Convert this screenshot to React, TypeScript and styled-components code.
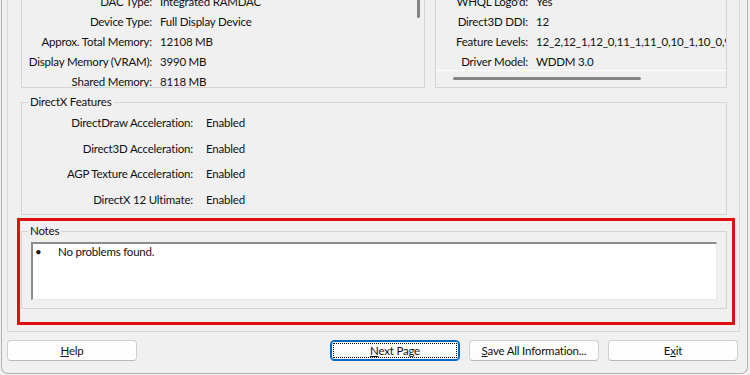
import React from 'react';
import styled, { createGlobalStyle } from 'styled-components';

const GlobalStyle = createGlobalStyle`
  html, body {
    margin: 0;
    padding: 0;
    background: #f0f0f0;
  }
  body {
    font-family: Lato, 'Noto Sans', 'Liberation Sans', sans-serif;
    font-size: 11.5px;
    letter-spacing: -0.2px;
    color: #111;
  }
`;

const Screen = styled.div`
  width: 750px;
  height: 375px;
  overflow: hidden;
  background: #f0f0f0;
`;

const Frame = styled.div`
  box-sizing: border-box;
  margin-left: 1px;
  width: 747px;
  height: 374px;
  border: 1px solid #b4b4b4;
  border-top: none;
  border-radius: 0 0 7px 7px;
  padding: 0 7px 0 5px;
  display: flex;
  flex-direction: column;
`;

const TabPanel = styled.div`
  box-sizing: border-box;
  height: 332px;
  border: 1px solid #d9d9d9;
  border-top: none;
  padding: 0 12px 0 13px;
  display: flex;
  flex-direction: column;
`;

const TopRow = styled.div`
  margin-top: -40px;
  height: 128px;
  display: grid;
  grid-template-columns: 404px 1fr;
  column-gap: 10px;
`;

const Box = styled.div`
  box-sizing: border-box;
  border: 1px solid #d5d5d5;
  display: flex;
  overflow: hidden;
`;

const ColumnBox = styled(Box)`
  flex-direction: column;
`;

const List = styled.div`
  flex: 1;
  padding-top: 10px;
  overflow: hidden;
`;

const Row = styled.div<{ $label: number; $gap: number; $h: number }>`
  display: flex;
  height: ${({ $h }) => $h}px;
  align-items: center;
  white-space: nowrap;

  & > span:first-child {
    flex: 0 0 ${({ $label }) => $label}px;
    text-align: right;
  }
  & > span:last-child {
    margin-left: ${({ $gap }) => $gap}px;
  }
`;

const VTrack = styled.div`
  flex: 0 0 12px;
  display: flex;
  justify-content: center;
`;

const VThumb = styled.div`
  margin-left: 1px;
  width: 3px;
  height: 57px;
  border-radius: 2px;
  background: #858585;
`;

const HTrack = styled.div`
  box-sizing: border-box;
  flex: 0 0 17px;
  border-top: 1px solid #ffffff;
  padding: 6px 0 0 17px;
`;

const HThumb = styled.div`
  width: 188px;
  height: 3px;
  border-radius: 2px;
  background: #858585;
`;

const Group = styled.fieldset`
  margin: 0;
  padding: 0;
  min-width: 0;
  border: 1px solid #d5d5d5;

  & > legend {
    margin-left: 6px;
    padding: 0 2px;
    line-height: 16px;
  }
`;

const FeatureGroup = styled(Group)`
  margin-top: 6px;
  padding-bottom: 2px;
`;

const Highlight = styled.div`
  box-sizing: border-box;
  margin: 3px -8px 0 -4px;
  border: 3px solid #e0100f;
  padding: 2px 5px 13px 1px;
`;

const NoteBox = styled.div`
  box-sizing: border-box;
  height: 58px;
  margin: 3px 9px 8px;
  background: #ffffff;
  border-style: solid;
  border-width: 2px 1px 1px 2px;
  border-color: #8c8c8c #e6e6e6 #e6e6e6 #8c8c8c;
  padding-left: 2px;
  display: flex;
  line-height: 16px;
`;

const Bullet = styled.span`
  flex: 0 0 23px;
`;

const ButtonBar = styled.div`
  margin-top: 8px;
  padding-right: 2px;
  display: flex;
  gap: 9px;
`;

const Spacer = styled.div`
  flex: 1;
`;

const Button = styled.div<{ $default?: boolean }>`
  box-sizing: border-box;
  width: 130px;
  height: 21px;
  border: 1px solid ${({ $default }) => ($default ? '#0067c0' : '#d0d0d0')};
  border-bottom-color: ${({ $default }) => ($default ? '#0067c0' : '#b8b8b8')};
  border-radius: 4px;
  background: #fdfdfd;
  display: flex;
  align-items: center;
  justify-content: center;
  outline: ${({ $default }) => ($default ? '1px dotted #000' : 'none')};
  outline-offset: -4px;
  box-shadow: ${({ $default }) => ($default ? 'inset 0 0 0 1px #0067c0' : 'none')};
`;

const Key = styled.span`
  text-decoration: underline;
`;

const displayRows = [
  ['Chip Type:', 'Intel(R) Iris(R) Xe Graphics Family'],
  ['DAC Type:', 'Integrated RAMDAC'],
  ['Device Type:', 'Full Display Device'],
  ['Approx. Total Memory:', '12108 MB'],
  ['Display Memory (VRAM):', '3990 MB'],
  ['Shared Memory:', '8118 MB'],
];

const driverRows = [
  ['Date:', '3/9/2023 5:30:00 PM'],
  ["WHQL Logo'd:", 'Yes'],
  ['Direct3D DDI:', '12'],
  ['Feature Levels:', '12_2,12_1,12_0,11_1,11_0,10_1,10_0,9_3,9_2,9_1'],
  ['Driver Model:', 'WDDM 3.0'],
];

const featureRows = [
  ['DirectDraw Acceleration:', 'Enabled'],
  ['Direct3D Acceleration:', 'Enabled'],
  ['AGP Texture Acceleration:', 'Enabled'],
  ['DirectX 12 Ultimate:', 'Enabled'],
];

export default function App() {
  return (
    <Screen>
      <GlobalStyle />
      <Frame>
        <TabPanel>
          <TopRow>
            <Box>
              <List>
                {displayRows.map(([k, v]) => (
                  <Row key={k} $label={130} $gap={8} $h={20}>
                    <span>{k}</span>
                    <span>{v}</span>
                  </Row>
                ))}
              </List>
              <VTrack>
                <VThumb />
              </VTrack>
            </Box>
            <ColumnBox>
              <List>
                {driverRows.map(([k, v]) => (
                  <Row key={k} $label={92} $gap={8} $h={20}>
                    <span>{k}</span>
                    <span>{v}</span>
                  </Row>
                ))}
              </List>
              <HTrack>
                <HThumb />
              </HTrack>
            </ColumnBox>
          </TopRow>

          <FeatureGroup>
            <legend>DirectX Features</legend>
            {featureRows.map(([k, v]) => (
              <Row key={k} $label={171} $gap={13} $h={25.5}>
                <span>{k}</span>
                <span>{v}</span>
              </Row>
            ))}
          </FeatureGroup>

          <Highlight>
            <Group>
              <legend>Notes</legend>
              <NoteBox>
                <Bullet>•</Bullet>
                <span>No problems found.</span>
              </NoteBox>
            </Group>
          </Highlight>
        </TabPanel>

        <ButtonBar>
          <Button>
            <span><Key>H</Key>elp</span>
          </Button>
          <Spacer />
          <Button $default>
            <span><Key>N</Key>ext Page</span>
          </Button>
          <Button>
            <span><Key>S</Key>ave All Information...</span>
          </Button>
          <Button>
            <span>E<Key>x</Key>it</span>
          </Button>
        </ButtonBar>
      </Frame>
    </Screen>
  );
}
